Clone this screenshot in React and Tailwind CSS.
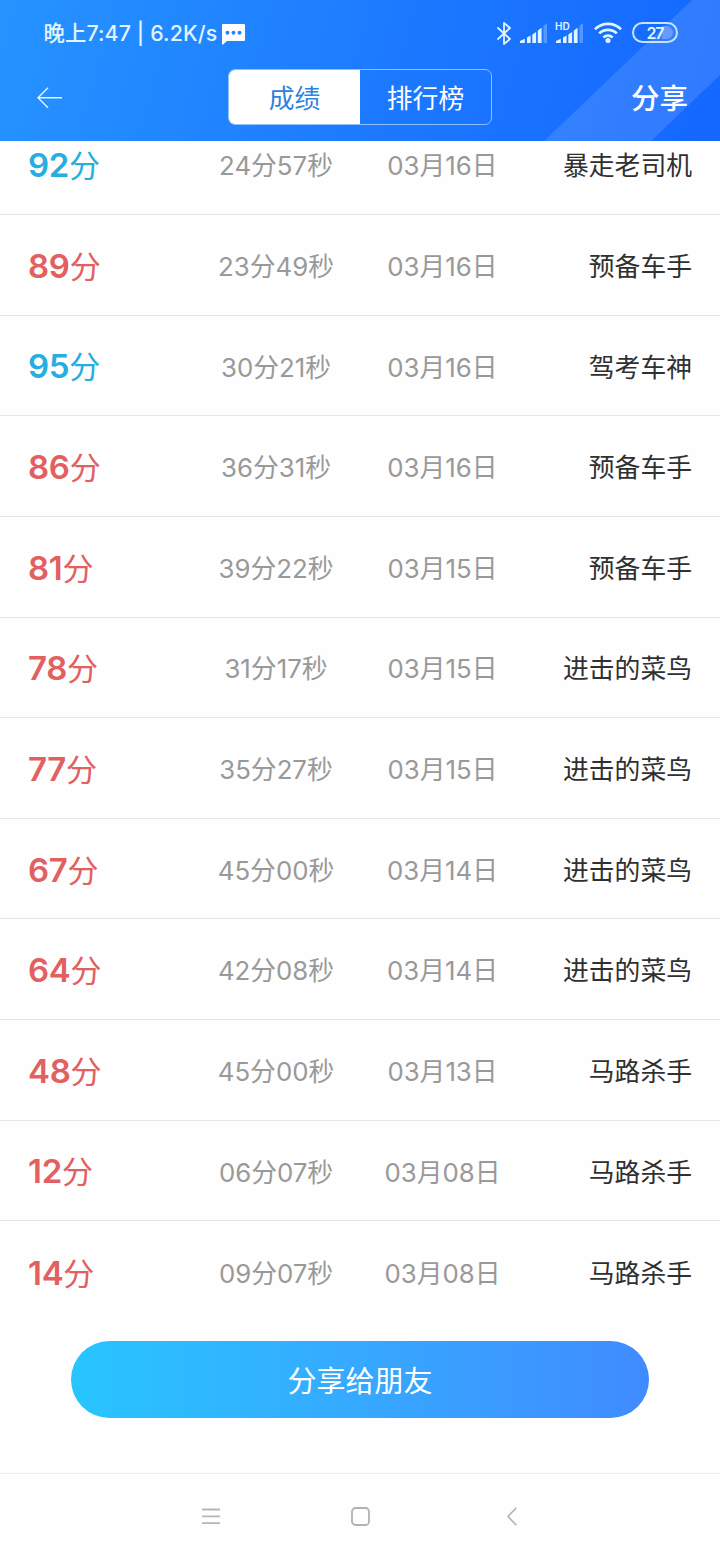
import React from "react";

const rows = [
  ["92", "24分57秒", "03月16日", "暴走老司机"],
  ["89", "23分49秒", "03月16日", "预备车手"],
  ["95", "30分21秒", "03月16日", "驾考车神"],
  ["86", "36分31秒", "03月16日", "预备车手"],
  ["81", "39分22秒", "03月15日", "预备车手"],
  ["78", "31分17秒", "03月15日", "进击的菜鸟"],
  ["77", "35分27秒", "03月15日", "进击的菜鸟"],
  ["67", "45分00秒", "03月14日", "进击的菜鸟"],
  ["64", "42分08秒", "03月14日", "进击的菜鸟"],
  ["48", "45分00秒", "03月13日", "马路杀手"],
  ["12", "06分07秒", "03月08日", "马路杀手"],
  ["14", "09分07秒", "03月08日", "马路杀手"],
];

function Signal() {
  return (
    <svg width="27" height="20" viewBox="0 0 27 20" fill="#e2f4ff">
      <path d="M0 20v-2l4.8-2.2V20zM7 14.5l3.6-2V20H7zM12.3 11.5l3.8-2.5v11h-3.8zM17.8 7.5l3.8-2.8V20h-3.8z" />
      <path d="M23.4 3L27 0v20h-3.6z" opacity=".3" />
    </svg>
  );
}

function StatusBar() {
  return (
    <div className="flex h-[66px] items-center pr-[42px] pl-[43.5px] text-[#e2f4ff]">
      <span className="pt-[2px] text-[21.3px] leading-none font-medium tracking-[0.15px] whitespace-nowrap">
        晚上7:47 | 6.2K/s
      </span>
      <svg className="mt-0.5 ml-[5px] shrink-0" width="23" height="21" viewBox="0 0 23 21">
        <path d="M1 0h21q1 0 1 1v15q0 1-1 1H5l-4 3.5q-1 .5-1-.5V1q0-1 1-1z" fill="#fff" />
        <g fill="#2287ff">
          <circle cx="5.5" cy="8.8" r="2" />
          <circle cx="11.5" cy="8.8" r="2" />
          <circle cx="17.5" cy="8.8" r="2" />
        </g>
      </svg>
      <div className="ml-auto flex items-center">
        <svg className="mr-[9px]" width="14" height="23" viewBox="0 0 14 23" fill="none" stroke="#e2f4ff" strokeWidth="1.8" strokeLinejoin="round" strokeLinecap="round">
          <path d="M1 6l12 11-6 5V1l6 5L1 17" />
        </svg>
        <div className="-mt-px flex">
          <Signal />
          <div className="relative ml-[9px] flex">
            <Signal />
            <span className="absolute -top-[2px] -left-[1px] text-[10px] leading-none font-semibold">HD</span>
          </div>
        </div>
        <svg className="-mt-px ml-[11px]" width="28" height="21" viewBox="0 0 28 21" fill="none" stroke="#e2f4ff" strokeWidth="2.7">
          <path d="M1 7.2a18.6 18.6 0 0 1 26 0M5.2 11.4a12.6 12.6 0 0 1 17.6 0M9.4 15.4a6.8 6.8 0 0 1 9.2 0" />
          <circle cx="14" cy="18.4" r="2.5" fill="#e2f4ff" stroke="none" />
        </svg>
        <div className="relative -mt-px ml-[10px] flex h-[21px] w-[46px] items-center justify-center rounded-full border-2 border-[#c9e3ff]">
          <div className="absolute right-[3px] h-[13px] w-[11px] rounded-r-full bg-white/25" />
          <span className="text-[16px] leading-none font-semibold tracking-[-1.2px]">27</span>
        </div>
      </div>
    </div>
  );
}

function Header() {
  return (
    <header className="relative h-[141px] shrink-0 bg-linear-[105deg,#2693ff_0%,#1c79ff_55%,#1467ff_100%]">
      <svg className="absolute inset-0" width="720" height="141" viewBox="0 0 720 141">
        <path d="M692 0H720V75L651 141H544z" fill="#fff" fillOpacity=".12" />
      </svg>
      <div className="relative">
        <StatusBar />
        <div className="flex h-[62px] items-center pr-8 pl-[37px] text-white">
          <svg className="mt-px" width="26" height="22" viewBox="0 0 26 22" fill="none" stroke="#e6f4ff" strokeWidth="1.4">
            <path d="M11 .8L1 10.8l10 10M1 10.8h24" />
          </svg>
          <div className="ml-[165px] flex h-14 w-[264px] overflow-hidden rounded-[7px] border border-[#8fc0ff] leading-none">
            <div className="flex w-[131px] items-center justify-center bg-white pt-[3px] text-[25.8px] text-[#2b83dc]">成绩</div>
            <div className="flex flex-1 items-center justify-center pt-[3px] text-[25.8px]">排行榜</div>
          </div>
          <div className="ml-auto pt-[5px] text-[28.5px] font-medium">分享</div>
        </div>
      </div>
    </header>
  );
}

function Row({ row, first, last }) {
  const [score, time, date, title] = row;
  return (
    <div className={first ? "flex h-[74px] flex-col justify-end overflow-hidden" : ""}>
      <div className={`flex h-[100.63px] shrink-0 items-center px-7 pt-1 ${last ? "" : "border-b border-[#e6e6e6]"}`}>
        <div className={`w-[164px] pb-px leading-none ${Number(score) >= 90 ? "text-[#27aee0]" : "text-[#e26060]"}`}>
          <span className="text-[33px] font-semibold tracking-[-0.3px]">{score}</span>
          <span className="text-[31px]">分</span>
        </div>
        <div className="w-[168px] text-center text-[25.8px] leading-none text-[#999]">{time}</div>
        <div className="w-[165px] text-center text-[25.8px] leading-none text-[#999]">{date}</div>
        <div className="flex-1 text-right text-[25.8px] leading-none whitespace-nowrap text-[#303030]">{title}</div>
      </div>
    </div>
  );
}

export default function App() {
  return (
    <div className="flex h-[1560px] w-[720px] flex-col overflow-hidden bg-[#fefefe] font-[Inter,'Noto_Sans_CJK_SC',sans-serif]">
      <Header />
      <main className="h-[1199.5px] shrink-0 overflow-hidden">
        {rows.map((row, i) => (
          <Row key={i} row={row} first={i === 0} last={i === rows.length - 1} />
        ))}
      </main>
      <button className="mx-[71px] flex h-[77.5px] shrink-0 items-center justify-center rounded-full bg-linear-to-r from-[#27c5ff] to-[#408bff] pt-[4px] text-[29px] text-white">
        分享给朋友
      </button>
      <nav className="mt-[55px] flex flex-1 items-center border-t border-[#ededed] pb-[2px] pl-[202px]">
        <svg width="18" height="17" viewBox="0 0 18 17" stroke="#b5b5b5" strokeWidth="1.8">
          <path d="M0 1.5h18M0 8.3h18M0 15.1h18" />
        </svg>
        <svg className="ml-[131px]" width="19" height="19" viewBox="0 0 19 19" fill="none" stroke="#b2b2b2" strokeWidth="1.8">
          <rect x="1" y="1" width="17" height="17" rx="3.5" />
        </svg>
        <svg className="ml-[137px]" width="10" height="19" viewBox="0 0 10 19" fill="none" stroke="#b2b2b2" strokeWidth="1.6">
          <path d="M9.4 .8L1 9.5l8.4 8.7" />
        </svg>
      </nav>
    </div>
  );
}
